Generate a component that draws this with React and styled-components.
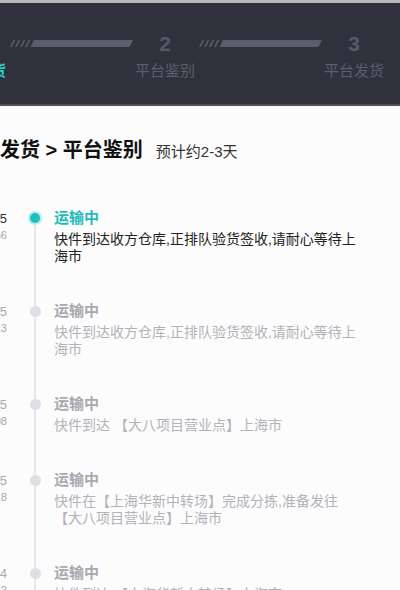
import React from 'react'
import styled, { createGlobalStyle } from 'styled-components'

const GlobalStyle = createGlobalStyle`
  html, body {
    margin: 0;
    padding: 0;
    background: #fcfcfc;
    overflow-x: hidden;
  }
  body {
    font-family: "Liberation Sans", "Noto Sans CJK SC", sans-serif;
  }
`

const Page = styled.div`
  width: 470px;
  margin-left: -60px;
  min-height: 590px;
  background: #fcfcfc;
`

const Header = styled.div`
  background: #30313d;
  border-top: 3px solid #b9b9bd;
  border-bottom: 2px solid #50515b;
  padding: 29px 0 23px 4px;
`

const Steps = styled.div`
  display: grid;
  grid-template-columns: 64px 125px 64px 125px 64px;
  grid-template-rows: 24px 20px;
  row-gap: 5px;
`

const StepNum = styled.div`
  font-size: 21px;
  font-weight: bold;
  line-height: 24px;
  text-align: center;
  color: ${p => (p.$active ? '#22d3d8' : '#585967')};
`

const StepLabel = styled.div`
  grid-row: 2;
  font-size: 15px;
  line-height: 20px;
  text-align: center;
  white-space: nowrap;
  color: ${p => (p.$active ? '#22d3d8' : '#5d5e6b')};
  font-weight: ${p => (p.$active ? 'bold' : 'normal')};
`

const BarWrap = styled.div`
  display: flex;
  align-items: center;
  justify-content: center;
  padding-bottom: 1px;
`

const Title = styled.div`
  margin: 30px 0 41px;
  padding-left: 20px;
  display: flex;
  align-items: baseline;
  line-height: 28px;
`

const TitleMain = styled.span`
  font-size: 20px;
  font-weight: bold;
  color: #111;
  white-space: nowrap;
`

const TitleSub = styled.span`
  font-size: 15px;
  color: #333;
  margin-left: 13px;
`

const Timeline = styled.div`
  display: flex;
  flex-direction: column;
`

const Item = styled.div`
  display: flex;
  align-items: stretch;
`

const DateCol = styled.div`
  width: 67px;
  margin-right: 14px;
  text-align: right;
  white-space: nowrap;
  overflow: hidden;
  padding-top: 4px;
`

const DateDay = styled.div`
  font-size: 13px;
  line-height: 16px;
  color: ${p => (p.$active ? '#333' : '#a9a9b0')};
`

const DateTime = styled.div`
  font-size: 11px;
  line-height: 16px;
  color: #a9a9b0;
`

const Rail = styled.div`
  width: 28px;
  display: flex;
  flex-direction: column;
  align-items: center;
`

const Segment = styled.div`
  width: 2px;
  background: ${p => (p.$hidden ? 'transparent' : '#e6e6ec')};
  height: ${p => p.$h}px;
  flex: ${p => (p.$grow ? 1 : 'none')};
`

const Dot = styled.div`
  flex: none;
  box-sizing: border-box;
  border-radius: 50%;
  width: ${p => (p.$active ? 14 : 11)}px;
  height: ${p => (p.$active ? 14 : 11)}px;
  background: ${p => (p.$active ? '#1fbfbf' : '#dedee5')};
  border: ${p => (p.$active ? '2px solid #b8eded' : 'none')};
`

const Content = styled.div`
  margin-left: 5px;
  width: 311px;
  padding-bottom: 35px;
`

const Status = styled.div`
  font-size: 15px;
  font-weight: bold;
  line-height: 22px;
  color: ${p => (p.$active ? '#26baba' : '#a8a8b0')};
`

const Desc = styled.div`
  margin-top: 2px;
  font-size: 14px;
  line-height: 17px;
  color: ${p => (p.$active ? '#222' : '#b2b2ba')};
`

const Bar = () => (
  <svg width="124" height="8" viewBox="0 0 124 8">
    {[0, 1, 2, 3].map(i => {
      const x = 1 + i * 5
      return (
        <polygon
          key={i}
          points={`${x + 3.5},0 ${x + 5.3},0 ${x + 1.8},7 ${x},7`}
          fill="#5c5d6a"
        />
      )
    })}
    <polygon points="25,0 124,0 120.5,7 21.5,7" fill="#5c5d6a" />
  </svg>
)

const steps = [
  { num: '1', label: '卖家发货', active: true },
  { num: '2', label: '平台鉴别' },
  { num: '3', label: '平台发货' },
]

const events = [
  { day: '2023-06-15', time: '14:32:56', desc: '快件到达收方仓库,正排队验货签收,请耐心等待上海市' },
  { day: '2023-06-15', time: '09:12:13', desc: '快件到达收方仓库,正排队验货签收,请耐心等待上海市' },
  { day: '2023-06-15', time: '07:40:08', desc: '快件到达 【大八项目营业点】上海市' },
  { day: '2023-06-15', time: '02:26:18', desc: '快件在【上海华新中转场】完成分拣,准备发往【大八项目营业点】上海市' },
  { day: '2023-06-14', time: '22:51:32', desc: '快件到达 【上海华新中转场】上海市' },
]

export default function App() {
  return (
    <>
      <GlobalStyle />
      <Page>
        <Header>
          <Steps>
            {steps.map((s, i) => (
              <React.Fragment key={s.num}>
                <StepNum $active={s.active} style={{ gridColumn: i * 2 + 1 }}>{s.num}</StepNum>
                <StepLabel $active={s.active} style={{ gridColumn: i * 2 + 1 }}>{s.label}</StepLabel>
                {i < steps.length - 1 && (
                  <BarWrap style={{ gridColumn: i * 2 + 2 }}>
                    <Bar />
                  </BarWrap>
                )}
              </React.Fragment>
            ))}
          </Steps>
        </Header>

        <Title>
          <TitleMain>卖家发货 &gt; 平台鉴别</TitleMain>
          <TitleSub>预计约2-3天</TitleSub>
        </Title>

        <Timeline>
          {events.map((e, i) => {
            const active = i === 0
            const r = active ? 7 : 5.5
            return (
              <Item key={i}>
                <DateCol>
                  <DateDay $active={active}>{e.day}</DateDay>
                  <DateTime>{e.time}</DateTime>
                </DateCol>
                <Rail>
                  <Segment $hidden={active} $h={11 - r} />
                  <Dot $active={active} />
                  <Segment $grow />
                </Rail>
                <Content>
                  <Status $active={active}>运输中</Status>
                  <Desc $active={active}>{e.desc}</Desc>
                </Content>
              </Item>
            )
          })}
        </Timeline>
      </Page>
    </>
  )
}
